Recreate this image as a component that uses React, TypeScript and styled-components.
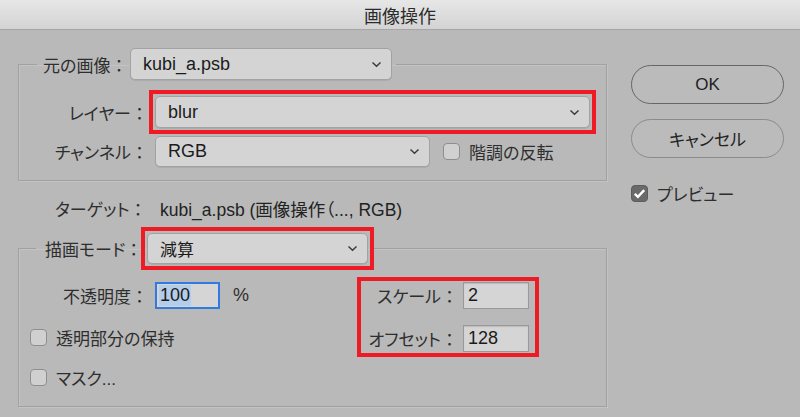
import React from "react";
import styled, { createGlobalStyle, css } from "styled-components";

const GlobalStyle = createGlobalStyle`
  html, body {
    margin: 0;
    padding: 0;
    background: #b9b9b9;
  }
`;

const Dialog = styled.div`
  width: 800px;
  height: 417px;
  overflow: hidden;
  background: #b9b9b9;
  font-family: "Liberation Sans", "Noto Sans CJK JP", sans-serif;
  font-size: 17px;
  color: #2e2e2e;
  font-feature-settings: "palt";
`;

const TitleBar = styled.div`
  height: 29px;
  border-bottom: 1px solid #a6a6a6;
  background: linear-gradient(#e7e7e7, #d3d3d3);
  display: flex;
  align-items: center;
  justify-content: center;
  font-size: 18px;
  color: #2b2b2b;
`;

const Body = styled.div`
  display: flex;
  gap: 24px;
  padding: 18px 16px 0 18px;
`;

const Main = styled.div`
  width: 589px;
  display: flex;
  flex-direction: column;
`;

const Side = styled.div`
  width: 153px;
  display: flex;
  flex-direction: column;
  padding-top: 17px;
`;

const Group = styled.fieldset<{ $pad: string }>`
  margin: 0;
  min-width: 0;
  border: 1px solid #a1a1a1;
  box-shadow: inset 1px 1px 0 #c3c3c3, 1px 1px 0 #c3c3c3;
  padding: ${(p) => p.$pad};
  display: flex;
  flex-direction: column;
`;

const Legend = styled.legend<{ $indent: number; $pad: number }>`
  display: flex;
  align-items: center;
  margin-left: ${(p) => p.$indent}px;
  padding: 0 4px 0 ${(p) => p.$pad}px;
`;

const LegendLabel = styled.span<{ $w: number }>`
  width: ${(p) => p.$w}px;
  flex: none;
  white-space: nowrap;
  color: #2e2e2e;
`;

const Rows = styled.div<{ $gap: number }>`
  display: flex;
  flex-direction: column;
  gap: ${(p) => p.$gap}px;
`;

const Row = styled.div<{ $gap?: number }>`
  display: flex;
  align-items: center;
  gap: ${(p) => p.$gap ?? 7}px;
`;

const Label = styled.span<{ $w: number }>`
  width: ${(p) => p.$w}px;
  flex: none;
  text-align: right;
  white-space: nowrap;
`;

// full-width colon keeps its whole em box, as in the original dialog
const Colon = styled.span`
  font-feature-settings: normal;
`;

// red annotation frame drawn around a control
const Mark = styled.div<{ $offset?: number }>`
  display: flex;
  flex: none;
  outline: 4px solid #ee1b24;
  outline-offset: ${(p) => p.$offset ?? 2}px;
`;

const Popup = styled.div<{ $w: number; $h?: number; $size?: number }>`
  width: ${(p) => p.$w}px;
  height: ${(p) => p.$h ?? 32}px;
  flex: none;
  box-sizing: border-box;
  display: flex;
  align-items: center;
  justify-content: space-between;
  padding: 0 9px 0 12px;
  background: #d4d4d4;
  border: 1px solid #a2a2a2;
  border-radius: 5px;
  box-shadow: 0 1px 0 rgba(0, 0, 0, 0.07);
  color: #1b1b1b;
  font-size: ${(p) => p.$size ?? 18}px;
`;

const Field = styled.div<{ $w: number; $focus?: boolean }>`
  width: ${(p) => p.$w}px;
  height: 27px;
  flex: none;
  box-sizing: border-box;
  display: flex;
  align-items: center;
  padding-left: 4px;
  background: #d5d5d5;
  border: 1px solid #999;
  box-shadow: inset 0 1px 1px rgba(0, 0, 0, 0.12);
  color: #1b1b1b;
  font-size: 18px;
  ${(p) =>
    p.$focus &&
    css`
      border: 2px solid #2f7be0;
      padding-left: 2px;
      box-shadow: none;
    `}
`;

const Selected = styled.span`
  background: #b4cdea;
  padding: 0 1px;
`;

const Box = styled.span<{ $checked?: boolean }>`
  width: 17px;
  height: 17px;
  flex: none;
  box-sizing: border-box;
  border-radius: 4px;
  border: 1px solid ${(p) => (p.$checked ? "#5c5c5c" : "#8e8e8e")};
  background: ${(p) => (p.$checked ? "#6a6a6a" : "#d0d0d0")};
  display: flex;
  align-items: center;
  justify-content: center;
`;

const Check = styled.label<{ $indent?: number }>`
  display: flex;
  align-items: center;
  gap: 9px;
  height: 24px;
  margin-left: ${(p) => p.$indent ?? 0}px;
  white-space: nowrap;
`;

const Target = styled.div`
  display: flex;
  align-items: center;
  height: 20px;
  margin: 17px 0 15px;
  padding-left: 37px;
`;

const TargetLabel = styled.span`
  width: 105px;
  flex: none;
`;

const TargetValue = styled.span`
  color: #222;
  font-size: 17.5px;
`;

const ModeGrid = styled.div`
  display: grid;
  grid-template-columns: 343px auto;
  align-items: start;
  justify-items: start;
`;

const ScaleBox = styled.div`
  display: flex;
  flex-direction: column;
  gap: 16px;
  padding-right: 5px;
  outline: 4px solid #ee1b24;
  outline-offset: 1px;
`;

const Percent = styled.span`
  margin-left: 6px;
  font-size: 18px;
`;

const Button = styled.div<{ $default?: boolean }>`
  height: 39px;
  box-sizing: border-box;
  border-radius: 20px;
  border: ${(p) => (p.$default ? "1.5px solid #666" : "1px solid #8b8b8b")};
  background: #bbbbbb;
  display: flex;
  align-items: center;
  justify-content: center;
  color: #222;
  font-size: 17px;
  & + & {
    margin-top: 15px;
  }
`;

const Preview = styled(Check)`
  margin-top: 23px;
`;

const Chevron = () => (
  <svg width="11" height="7" viewBox="0 0 11 7">
    <path d="M1.5 1.5 L5.5 5.2 L9.5 1.5" fill="none" stroke="#3c3c3c" strokeWidth="1.5" />
  </svg>
);

const Tick = () => (
  <svg width="13" height="11" viewBox="0 0 13 11">
    <path d="M1.8 5.8 L4.9 8.8 L11.2 2.2" fill="none" stroke="#fff" strokeWidth="2.4" />
  </svg>
);

const App = () => {
  return (
    <Dialog>
      <GlobalStyle />
      <TitleBar>画像操作</TitleBar>
      <Body>
        <Main>
          <Group $pad="16px 16px 13px 0">
            <Legend $indent={18} $pad={6}>
              <LegendLabel $w={87}>
                元の画像<Colon>：</Colon>
              </LegendLabel>
              <Popup $w={262}>
                kubi_a.psb
                <Chevron />
              </Popup>
            </Legend>
            <Rows $gap={8}>
              <Row>
                <Label $w={129}>
                  レイヤー<Colon>：</Colon>
                </Label>
                <Mark>
                  <Popup $w={435}>
                    blur
                    <Chevron />
                  </Popup>
                </Mark>
              </Row>
              <Row>
                <Label $w={129}>
                  チャンネル<Colon>：</Colon>
                </Label>
                <Popup $w={275} $h={31}>
                  RGB
                  <Chevron />
                </Popup>
                <Check $indent={6}>
                  <Box />
                  階調の反転
                </Check>
              </Row>
            </Rows>
          </Group>

          <Target>
            <TargetLabel>
              ターゲット<Colon>：</Colon>
            </TargetLabel>
            <TargetValue>kubi_a.psb (画像操作（..., RGB)</TargetValue>
          </Target>

          <Group $pad="18px 0 17px 0">
            <Legend $indent={17} $pad={9}>
              <LegendLabel $w={102}>
                描画モード<Colon>：</Colon>
              </LegendLabel>
              <Mark>
                <Popup $w={221} $h={31} $size={17}>
                  減算
                  <Chevron />
                </Popup>
              </Mark>
            </Legend>
            <ModeGrid>
              <Rows $gap={16}>
                <Row>
                  <Label $w={129}>
                    不透明度<Colon>：</Colon>
                  </Label>
                  <Field $w={65} $focus>
                    <Selected>100</Selected>
                  </Field>
                  <Percent>%</Percent>
                </Row>
                <Check $indent={11}>
                  <Box />
                  透明部分の保持
                </Check>
                <Check $indent={11}>
                  <Box />
                  マスク...
                </Check>
              </Rows>
              <ScaleBox>
                <Row $gap={5}>
                  <Label $w={96}>
                    スケール<Colon>：</Colon>
                  </Label>
                  <Field $w={66}>2</Field>
                </Row>
                <Row $gap={5}>
                  <Label $w={96}>
                    オフセット<Colon>：</Colon>
                  </Label>
                  <Field $w={66}>128</Field>
                </Row>
              </ScaleBox>
            </ModeGrid>
          </Group>
        </Main>

        <Side>
          <Button $default>OK</Button>
          <Button>キャンセル</Button>
          <Preview>
            <Box $checked>
              <Tick />
            </Box>
            プレビュー
          </Preview>
        </Side>
      </Body>
    </Dialog>
  );
};

export default App;
